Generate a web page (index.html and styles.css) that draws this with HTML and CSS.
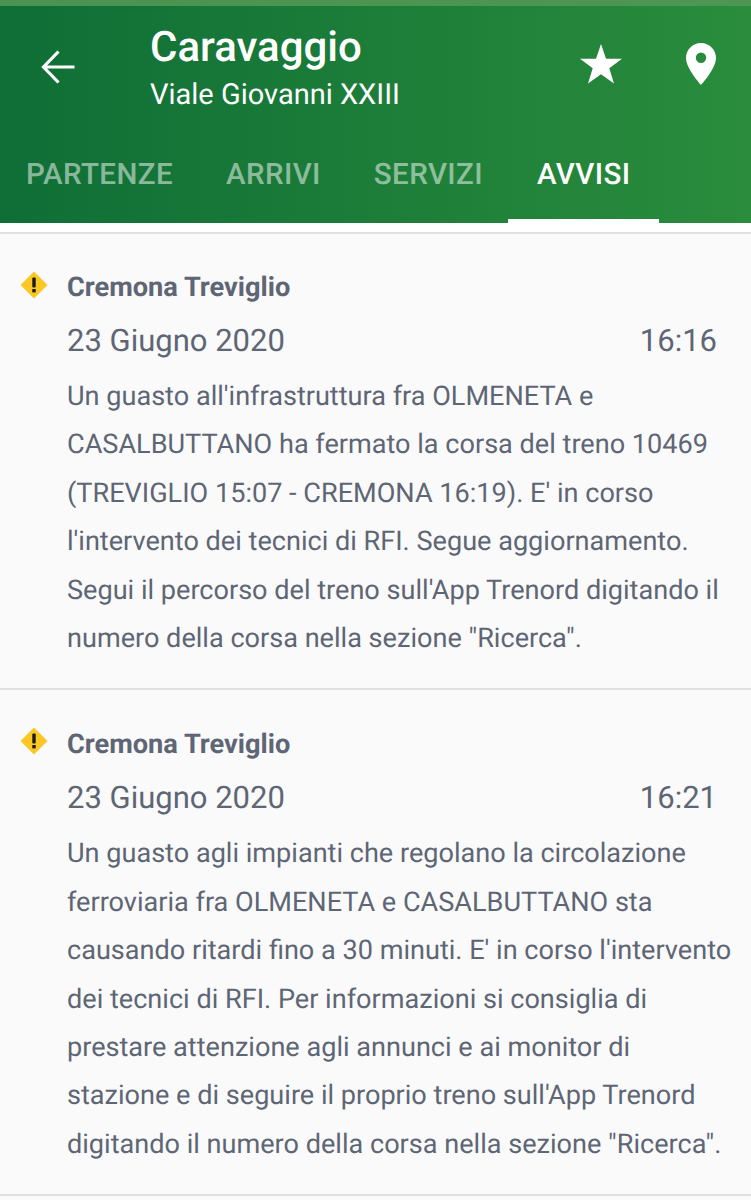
FILE: index.html
```html
<!DOCTYPE html>
<html lang="it">
<head>
<meta charset="utf-8">
<title>Caravaggio</title>
<link rel="stylesheet" href="styles.css">
</head>
<body>
<div class="status"></div>
<header class="header">
  <div class="toolbar">
    <button class="icon-btn back" aria-label="Indietro">
      <svg width="36" height="36" viewBox="0 0 36 36"><path d="M34.500 18H4M18.500 2.500L3.500 18L18.500 33.500" fill="none" stroke="#fff" stroke-width="3.200"/></svg>
    </button>
    <div class="titles">
      <div class="title">Caravaggio</div>
      <div class="subtitle">Viale Giovanni XXIII</div>
    </div>
    <div class="actions">
      <svg class="star" width="42" height="40" viewBox="0 0 42 40"><path fill="#fff" d="M21 0l5 14.700h16l-12.700 9.600 4.700 15.200L21 30.300 8 39.500l4.700-15.200L0 14.700h16z"/></svg>
      <svg class="pin" width="30" height="42" viewBox="0 0 30 42"><path fill="#fff" fill-rule="evenodd" d="M15 0C6.700 0 0 6.700 0 15c0 10.500 15 27 15 27s15-16.500 15-27C30 6.700 23.300 0 15 0zm0 20a5.200 5.200 0 1 1 0-10.400A5.200 5.200 0 0 1 15 20z"/></svg>
    </div>
  </div>
  <nav class="tabs">
    <span class="tab">PARTENZE</span>
    <span class="tab">ARRIVI</span>
    <span class="tab">SERVIZI</span>
    <span class="tab active">AVVISI</span>
  </nav>
</header>
<div class="gap"></div>
<main>
  <article class="notice">
    <svg class="warn" width="28" height="28" viewBox="0 0 28 28"><path fill="#fbc723" d="M14 .5L27.500 14 14 27.500.5 14z"/><rect x="12.300" y="6.500" width="3.400" height="10" rx="1" fill="#1a1a1a"/><rect x="12.300" y="18" width="3.400" height="3.400" fill="#1a1a1a"/></svg>
    <h2 class="line-title">Cremona Treviglio</h2>
    <div class="meta"><span>23 Giugno 2020</span><span class="time">16:16</span></div>
    <p class="body">Un guasto all'infrastruttura fra OLMENETA e CASALBUTTANO ha fermato la corsa del treno 10469 (TREVIGLIO 15:07 - CREMONA 16:19). E' in corso l'intervento dei tecnici di RFI. Segue aggiornamento. Segui il percorso del treno sull'App Trenord digitando il numero della corsa nella sezione "Ricerca".</p>
  </article>
  <article class="notice">
    <svg class="warn" width="28" height="28" viewBox="0 0 28 28"><path fill="#fbc723" d="M14 .5L27.500 14 14 27.500.5 14z"/><rect x="12.300" y="6.500" width="3.400" height="10" rx="1" fill="#1a1a1a"/><rect x="12.300" y="18" width="3.400" height="3.400" fill="#1a1a1a"/></svg>
    <h2 class="line-title">Cremona Treviglio</h2>
    <div class="meta"><span>23 Giugno 2020</span><span class="time">16:21</span></div>
    <p class="body">Un guasto agli impianti che regolano la circolazione ferroviaria fra OLMENETA e CASALBUTTANO sta causando ritardi fino a 30 minuti. E' in corso l'intervento dei tecnici di RFI. Per informazioni si consiglia di prestare attenzione agli annunci e ai monitor di stazione e di seguire il proprio treno sull'App Trenord digitando il numero della corsa nella sezione "Ricerca".</p>
  </article>
</main>
</body>
</html>
```
FILE: styles.css
```css
* { box-sizing: border-box; }
html, body { margin: 0; padding: 0; }
body {
  width: 751px;
  height: 1200px;
  overflow: hidden;
  background: #fafafa;
  font-family: Roboto, "Noto Sans", sans-serif;
  text-rendering: geometricPrecision;
}
.status { height: 6px; background: linear-gradient(90deg, #4b9350, #4f9553); }
.header {
  height: 217px;
  background: linear-gradient(90deg, #0f6e36, #2a8c3c);
  display: flex;
  flex-direction: column;
}
.toolbar { height: 128px; display: flex; align-items: flex-start; }
.icon-btn { border: 0; background: none; padding: 0; }
.back { width: 150px; padding: 41px 0 0 40px; text-align: left; height: 80px; display: block; }
.back svg { display: block; }
.titles { flex: 1; padding-top: 18px; color: #fff; }
.title { font-size: 42px; font-weight: 500; line-height: 48px; }
.subtitle { font-size: 29px; line-height: 36px; margin-top: 5px; }
.actions { display: flex; align-items: flex-start; padding: 38px 35px 0 0; gap: 64px; }
.star { margin-top: 0; }
.pin { margin-top: -1px; }
.tabs { height: 89px; display: flex; }
.tab {
  padding: 24px 27px 0 26px;
  font-size: 29.500px;
  font-weight: 500;
  color: rgba(255, 255, 255, .5);
  letter-spacing: .4px;
  border-bottom: 4px solid transparent;
}
.tab.active { color: #fff; margin-left: -2px; padding-left: 29px; padding-right: 29px; border-bottom-color: #fff; }
.gap { height: 11px; background: #fff; border-bottom: 2px solid #e0e0e0; }
.notice {
  position: relative;
  padding: 38px 16px 26px 67px;
  border-bottom: 2px solid #e0e0e0;
  color: #5e6675;
}
.notice + .notice { padding-top: 39px; }
.warn { position: absolute; left: 20px; top: 37px; }
.line-title { margin: 0; font-size: 27.200px; font-weight: 700; line-height: 30px; }
.meta { display: flex; justify-content: space-between; font-size: 31px; line-height: 40px; margin-top: 19px; padding-right: 18px; }
.body { margin: 11px 0 0; font-size: 27.100px; line-height: 48.400px; }
```
